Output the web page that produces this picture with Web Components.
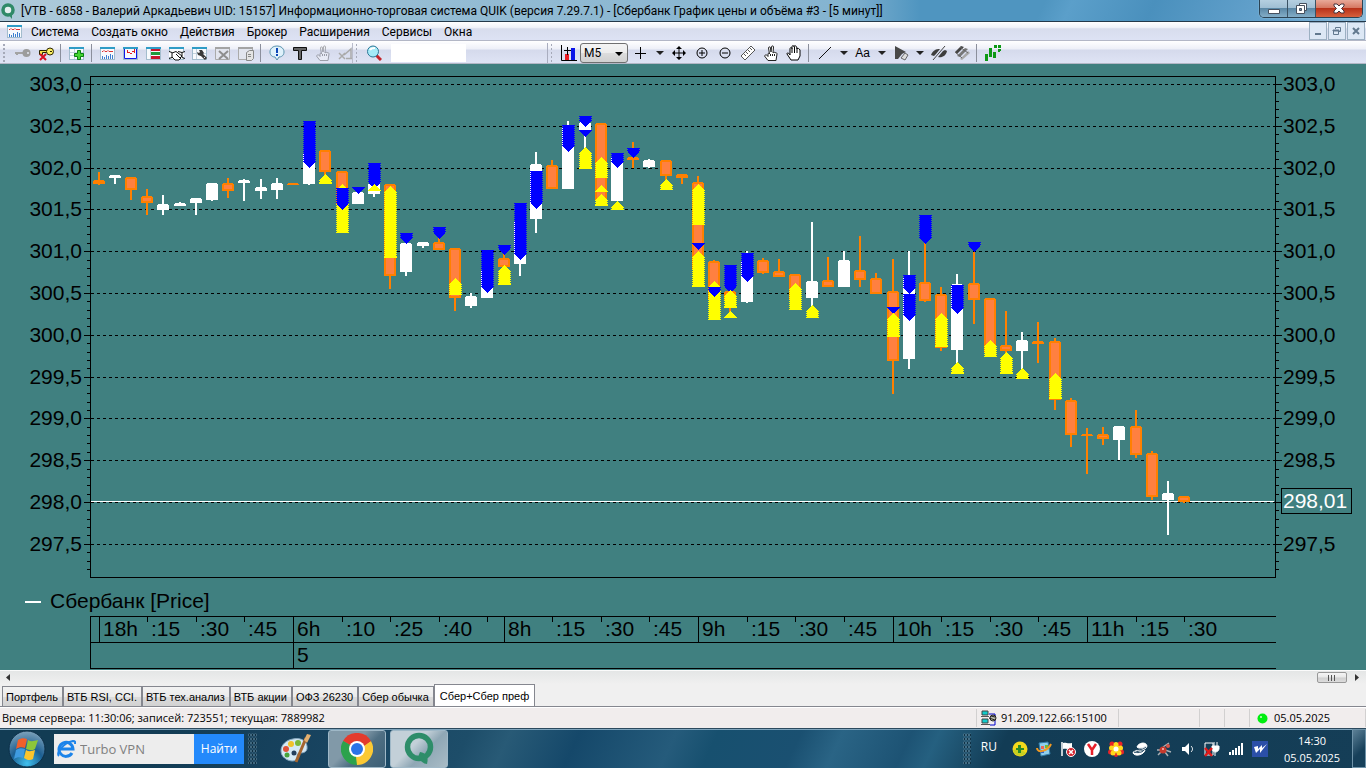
<!DOCTYPE html>
<html lang="ru">
<head>
<meta charset="utf-8">
<title>QUIK – Сбербанк График цены и объёма</title>
<style>
  html, body { height: 100%; margin: 0; }
  body { font-family: "Open Sans", "Noto Sans", sans-serif; font-size: 12px; color: #000; }
</style>
</head>
<body>
<quik-desktop></quik-desktop>
<script>
const RESET = `
  * { box-sizing: border-box; }
  button { font: inherit; color: inherit; border: 0; padding: 0; margin: 0; background: none; cursor: default; white-space: nowrap; }
  svg { display: block; }
`;
class BaseElement extends HTMLElement {
  connectedCallback() {
    if (this.shadowRoot) return;
    this.attachShadow({ mode: 'open' }).innerHTML = `<style>${RESET}${this.styles()}</style>${this.markup()}`;
    this.ready();
  }
  styles() { return ''; }
  markup() { return '<slot></slot>'; }
  ready() {}
}

/* ---------- icons (16×16 grid unless a viewBox is given) ---------- */
const WINDOW = `<path d="M0 2h15v13H0z" fill="#f8fafd"/><path d="M0 2h15v2H0z" fill="#2f9cc6"/><path d="M0 4h1v10H0zM14 4h1v10h-1zM0 14h15v1H0z" fill="#a3bccd"/>`;
const HAND = `<path d="M5 15.500L1.500 11l1.500-1.500 2 2V9c0-1 1-1 1.500 0L5.500 3c0-1.500 2-1.500 2 0l.5 4 .5-5c0-1.500 2-1.500 2 0l-.5 6c1-1 2-1 2 0 1-1 2 0 2 1l-1 6.500z" fill="#fff" stroke="#222"/><path d="M7.500 9v2M9.500 9v2M11.500 9v2" stroke="#222"/>`;
const ICONS = {
  window: WINDOW + '<path d="M2 6.500h1l1-1 1 1h2l1-1 1 1h4" stroke="#d33" fill="none"/><path d="M2 14v-3h1v3h1v-2h1v2h1v-4h1v4h1v-3h1v3h1V9h1v5h1v-4h1v4z" fill="#3d7fd0"/>',
  keyGray: '<path d="M0 7h9v2H3v1H1V9H0z" fill="#a3a3a3"/><circle cx="11.500" cy="8" r="4" fill="#9c9c9c"/><circle cx="13" cy="8" r="1" fill="#e4e7f2"/>',
  keyRed: '<path d="M1.500 5.500h8v2h-5v2h-3z" fill="#f4e24a" stroke="#2b2400"/><circle cx="12" cy="6.500" r="3.500" fill="#fbef63" stroke="#2b2400"/><path d="M12 6h2v1h-2z" fill="#2b2400"/><path d="M2 9l6 6M8 9l-6 6" stroke="#d90f1f" stroke-width="2"/>',
  add: WINDOW + '<path d="M5.500 4v10M1 7.500h13M1 10.500h13" stroke="#c3d2de"/><path d="M8.500 5.500h3v3h3v3h-3v3h-3v-3h-3v-3h3z" fill="#44d431" stroke="#0a7f10"/>',
  graph: WINDOW + '<path d="M1.500 4v9.500h12V4" fill="none" stroke="#1018e8"/><path d="M4 5h1v3H4zM5 7h2v1H5zM7 8h2v1H7zM9 6h2v1H9zM11 4h1v4h-1z" fill="#e02020"/>',
  book: WINDOW + '<path d="M4.500 4v10" stroke="#c3d2de"/><path d="M5 4h9v2H5zM5 11h9v3H5z" fill="#c8152e"/><path d="M5 7h9v3H5z" fill="#1f9a3d"/>',
  shake: WINDOW + '<path d="M0 7l4-1h7l4 1v5l-4 1-1 2H5l-1-2-4-1z" fill="#fff"/><path d="M0 6.500l3 1v5l-3 1M16 6.500l-3 1v5l3 1M3 8l4-1.500L13 11l-2 2M3 12l3 3h4l2-2M7 9l4 4M9 6.500l4 1" fill="none" stroke="#111"/>',
  wrench: WINDOW + '<path d="M4.500 4v10M1 8.500h13" stroke="#c3d2de"/><path d="M8.500 8.500L14 14" stroke="#3a3a3a" stroke-width="3"/><path d="M7 5h3l2 3-3 3-3-1-1-3 2 1 1-1z" fill="#3a3a3a"/><path d="M12 12l1 1" stroke="#ddd"/>',
  windowX: '<path d="M.5 2.500h14v12H.5z" fill="#e2e5ee" stroke="#aaa"/><path d="M0 2h15v2H0z" fill="#a4a4a4"/><path d="M4 6l9 8M13 6l-9 8" stroke="#8e8e8e" stroke-width="2"/>',
  windowD: '<path d="M.5 2.500h14v12H.5z" fill="#e2e5ee" stroke="#aaa"/><path d="M0 2h15v2H0z" fill="#a4a4a4"/><path d="M8.500 7.500l3-2h4v8l-2 2h-5z" fill="#e4e4e4" stroke="#888"/><path d="M10 9.500h3M10 11.500h3" stroke="#888"/>',
  info: '<path d="M8 1c9 0 9 11 2 11l-2 3-2-3C-1 12-1 1 8 1z" fill="#dff1fb" stroke="#5b94ae"/><path d="M7 3h2v5H7zM7 9h2v2H7z" fill="#0d47b8"/>',
  text: '<path d="M1.500 2.500h13v3h-5v9h-3v-9h-5z" fill="#666" stroke="#111"/>',
  hand: HAND,
  handGray: '<g opacity=".35">' + HAND + '</g>',
  arrowGray: '<path d="M1 8l6 6M7 8l-6 6M6 10l7-6v9M8 13.500h6" stroke="#aaa" fill="none" stroke-width="1.500"/>',
  lens: '<path d="M10 10l5 5" stroke="#c3242b" stroke-width="3"/><circle cx="7" cy="6.500" r="5.500" fill="#a5eaf8" stroke="#2d7796"/><path d="M4 5c1-2 3-2 5-2" stroke="#fff" stroke-width="2" fill="none"/>',
  chartAdd: '<path d="M.5 0v15.500H16" stroke="#000" fill="none"/><path d="M4 9h4v6H4z" fill="#ec1c24"/><path d="M10 3h4v12h-4z" fill="#0a14e8"/><path d="M6.500 2v8M3 5.500h7" stroke="#000"/>',
  plus: '<path d="M7 2h1v12H7zM2 8h11v1H2z" fill="#000"/>',
  move: '<path d="M8 2v12M2 8h12" stroke="#000"/><path d="M8 1l3 3H5zM8 15l3-3H5zM1 8l3-3v6zM15 8l-3-3v6z" fill="#000"/>',
  zoomIn: '<circle cx="8" cy="8" r="5" fill="none" stroke="#000"/><path d="M5 8h6M8 5v6" stroke="#000"/>',
  zoomOut: '<circle cx="8" cy="8" r="5" fill="none" stroke="#000"/><path d="M5 8h6" stroke="#000"/>',
  ruler: '<path d="M1 11L11 1l4 4L5 15z" fill="#fff" stroke="#555"/><path d="M4 9l2 2M6 7l2 2M8 5l2 2M10 3l2 2" stroke="#555"/>',
  palm: '<path d="M5 15l-4-6c0-2 2-1 3 1V4c0-2 2-2 2 0V2c0-2 2-2 2 0v0c0-2 2-2 3 1v1c0-1 2-1 3 1v6l-2 4z" fill="#fff" stroke="#000"/><path d="M6 4v4M8.500 2v6M11 3v5" stroke="#000"/>',
  line: '<path d="M2 14L14 2" stroke="#111"/>',
  cone: '<path d="M2 1l11 6-4 2-4 5H2z" fill="#484848"/><path d="M8 13l4-5 3 2-3 5z" fill="#ddd" stroke="#666"/>',
  eye: '<path d="M0 10c2-5 5-6 9-6l-4 5-2 2zM16 6c-1 5-5 7-9 6l5-6 2-1z" fill="#3d3d3d"/><path d="M2 15L14 1" stroke="#444"/>',
  layers: '<path d="M1 7l6-6 3 1-7 7z" fill="#444"/><path d="M3 11l8-8 3 1-8 8z" fill="#777"/><path d="M6 14l8-8 2 2-8 7z" fill="#a8a8a8"/><path d="M1 7l7 6M6 2l8 6" stroke="#666"/>',
  bars: '<path d="M0 9h3v7H0zM4 3h3v9H4zM8 7h3v6H8zM9 0h3v3H9zM13 0h3v3h-3zM13 4h3v2h-1v1h-2z" fill="#0d9915"/>'
};
const icon = (name, size = 16) => `<svg viewBox="0 0 16 16" width="${size}" height="${size}" aria-hidden="true">${ICONS[name]}</svg>`;

/* ---------- title bar ---------- */
customElements.define('title-bar', class extends BaseElement {
  styles() { return `
    :host { display: flex; height: 22px; align-items: flex-start; border-bottom: 1px solid #24394a;
      background: linear-gradient(90deg, rgba(190,211,222,.85) 0, rgba(168,199,217,.8) 400px, rgba(150,190,214,.75) 840px, rgba(90,160,205,0) 920px),
        linear-gradient(115deg, #4f95c0 0 76%, #5b9fca 78%, #4a90bd 84%, #69a5cf 94%, #8cbbd9); }
    .logo { margin: 3px 6px 0 1px; }
    h1 { flex: 1; margin: 0; font: 12px/22px Roboto, "Open Sans", sans-serif; white-space: nowrap; }
    .win { display: flex; height: 18px; margin-right: 3px; border: 1px solid #2b4354; border-top: 0; border-radius: 0 0 5px 5px; overflow: hidden; box-shadow: 0 0 1px #dff; }
    .win button { width: 28px; display: grid; place-items: center; border-right: 1px solid #3a5264; background: linear-gradient(#b5cfe0, #a0bfd4 45%, #5b88a6 50%, #83adc7); }
    .win button:last-child { width: 46px; border: 0; background: linear-gradient(#e8a999, #d67863 45%, #b8321a 50%, #d7603d); }`; }
  markup() { return `
    <svg class="logo" width="14" height="16" viewBox="0 0 14 16"><circle cx="7" cy="7" r="5" fill="#e6f0f0" stroke="#2f8a68" stroke-width="3.500"/><path d="M7 11l4 0v5z" fill="#2f8a68"/></svg>
    <h1>[VTB - 6858 - Валерий Аркадьевич UID: 15157] Информационно-торговая система QUIK (версия 7.29.7.1) - [Сбербанк График цены и объёма #3 - [5 минут]]</h1>
    <div class="win">
      <button aria-label="Свернуть"><svg width="14" height="12"><path d="M1.500 6.500h11v4h-11z" fill="#fff" stroke="#46505e"/></svg></button>
      <button aria-label="Развернуть"><svg width="13" height="13"><path d="M4.500 1.500h7v7h-7z" fill="#fff" stroke="#46505e"/><path d="M1.500 3.500h8v8h-8z" fill="#fff" stroke="#46505e"/><path d="M4.500 6.500h2v2h-2z" fill="#6b93ad" stroke="#46505e"/></svg></button>
      <button aria-label="Закрыть"><svg width="14" height="13"><path d="M2 2h3l2 2 2-2h3v2L9.500 6.500 12 9v2H9L7 9l-2 2H2V9l2.500-2.500L2 4z" fill="#fff" stroke="#46333c"/></svg></button>
    </div>`; }
});

/* ---------- menu ---------- */
customElements.define('menu-bar', class extends BaseElement {
  styles() { return `
    :host { display: flex; height: 19px; align-items: center; padding: 0 1px 0 7px; background: linear-gradient(#fff, #f0f2f9 30%, #d8dded 38%, #dde2f4); border-bottom: 1px solid #b3b7c6; }
    nav { flex: 1; display: flex; padding: 2px 0 0 2px; font: 12px/18px Roboto, "Open Sans", sans-serif; }
    nav button { padding: 0 6px; }
    .mdi { display: flex; gap: 1px; }
    .mdi button { width: 18px; height: 18px; display: grid; place-items: center; border: 1px solid #9cb0c2; background: #dde8f5; }`; }
  markup() { return `${icon('window')}
    <nav>${['Система', 'Создать окно', 'Действия', 'Брокер', 'Расширения', 'Сервисы', 'Окна'].map(t => `<button>${t}</button>`).join('')}</nav>
    <div class="mdi">
      <button aria-label="Свернуть окно"><svg width="10" height="10"><path d="M2 7h6v2H2z" fill="#62798e"/></svg></button>
      <button aria-label="Восстановить окно"><svg width="10" height="10"><path d="M3.500 3V1.500h5v4H7M1.500 4.500h5v4h-5zM1 4h6v1H1z" fill="none" stroke="#62798e"/></svg></button>
      <button aria-label="Закрыть окно"><svg width="10" height="10"><path d="M2 2l6 6M8 2L2 8" stroke="#62798e" stroke-width="2"/></svg></button>
    </div>`; }
});

/* ---------- toolbar ---------- */
customElements.define('tool-button', class extends BaseElement {
  styles() { return `:host { display: block; width: 23px; flex: none; } button { width: 100%; height: 20px; display: grid; place-items: center; font: 12px "Liberation Sans", sans-serif; }
    :host([menu]) { width: 15px; }`; }
  markup() {
    const name = this.getAttribute('icon');
    const inner = this.hasAttribute('menu') ? '<svg width="8" height="5"><path d="M0 0h8L4 4z" fill="#222"/></svg>' : name ? icon(name) : '<slot></slot>';
    return `<button aria-label="${this.getAttribute('label') || name || ''}">${inner}</button>`;
  }
});
customElements.define('tool-bar', class extends BaseElement {
  styles() { return `
    :host { display: flex; height: 23px; align-items: center; padding-top: 2px; background: linear-gradient(#fff, #eef0f8 35%, #d5daec 42%, #dfe4f5); border-bottom: 1px solid #b3b7c6; }
    .group { display: flex; align-items: center; height: 20px; }
    .keys { width: 353px; border-right: 1px solid #b9bccb; overflow: hidden; }
    .find { width: 195px; border-right: 1px solid #a9adbf; }
    i { flex: none; width: 11px; height: 20px; background: radial-gradient(circle, #a5a9b8 1px, transparent 1px) 2px 0 / 4px 4px; background-clip: content-box; padding: 0 5px 0 2px; }
    .find i, .draw i { width: 9px; }
    hr { flex: none; width: 1px; height: 18px; margin: 0 4px 0 3px; border: 0; background: #8b8f9c; }
    .find input { width: 75px; height: 18px; margin-left: 6px; border: 0; background: #fff; padding: 0 4px; font: inherit; }
    .combo { position: relative; width: 48px; height: 20px; margin-right: 1px; }
    select { display: block; appearance: none; width: 48px; height: 20px; padding: 0 0 0 3px; font: 12px Roboto, sans-serif; color: #000; border: 1px solid #707070; border-radius: 3px; background: linear-gradient(#f4f4f4, #ececec 48%, #dcdcdc 52%, #d0d0d0); }
    .combo svg { position: absolute; right: 5px; top: 9px; pointer-events: none; }`; }
  markup() {
    const b = (n, l) => `<tool-button icon="${n}" label="${l}"></tool-button>`;
    const m = '<tool-button menu label="Ещё"></tool-button>';
    return `
    <div class="group keys"><i></i>${b('keyGray', 'Соединить')}${b('keyRed', 'Разъединить')}<hr>${b('add', 'Создать')}<hr>${b('window', 'Таблица')}${b('graph', 'График')}${b('book', 'Котировки')}${b('shake', 'Сделки')}${b('wrench', 'Настройка')}${b('windowX', 'Удалить')}${b('windowD', 'Данные')}<hr>${b('info', 'Сообщения')}${b('text', 'Текст')}${b('handGray', 'Заявка')}${b('arrowGray', 'Снять')}</div>
    <div class="group find"><i></i>${b('lens', 'Найти')}<input aria-label="Поиск"></div>
    <div class="group draw"><i></i>${b('chartAdd', 'Добавить график')}
      <div class="combo"><select aria-label="Интервал"><option>M5</option></select><svg width="8" height="5"><path d="M0 0h8L4 4z" fill="#000"/></svg></div>
      ${b('plus', 'Курсор')}${m}${b('move', 'Переместить')}${b('zoomIn', 'Увеличить')}${b('zoomOut', 'Уменьшить')}${b('ruler', 'Линейка')}${b('hand', 'Указать')}${b('palm', 'Рука')}<hr>${b('line', 'Линия')}${m}<tool-button label="Надпись">Aa</tool-button>${m}${b('cone', 'Заливка')}${m}${b('eye', 'Скрыть')}${b('layers', 'Слои')}<hr>${b('bars', 'Сделки на графике')}</div>`;
  }
});

/* ---------- price chart ---------- */
/* Candle: kind (w rising, o falling), high, body top, body bottom, low; y runs down in chart units. */
const CANDLES = `o 172 180 184 185|w 175 175 178 184|o 177 177 190 200|o 189 196 203 215|w 195 204 210 215|w 202 203 206 206|w 198 198 203 215|w 183 183 200 201|o 178 183 191 198|w 179 180 183 201|w 179 187 191 199|w 178 183 190 199|o 183 183 185 185|w 152 152 184 185|o 150 150 172 175|o 171 171 205 205|w 192 192 204 204|w 183 183 194 197|o 184 184 276 289|w 243 243 272 276|w 242 242 246 248|o 238 242 250 250|o 248 248 298 311|w 293 296 306 308|w 270 270 298 298|o 254 258 267 267|w 220 220 264 276|w 152 164 219 233|o 160 165 189 189|w 121 126 189 189|w 122 122 131 149|o 123 123 200 200|w 156 156 201 201|o 142 157 160 168|w 159 160 167 168|o 160 160 176 180|o 174 174 178 184|o 176 182 270 270|o 260 261 300 300|o 290 291 300 312|w 251 260 302 303|o 258 260 273 274|o 259 271 277 277|o 274 274 300 300|w 222 281 298 306|o 257 280 287 287|w 251 260 287 287|o 236 270 280 287|o 273 278 294 294|o 259 291 361 394|w 251 276 359 369|o 243 282 301 302|o 287 294 348 351|w 274 284 350 363|o 252 283 300 324|o 298 298 352 352|o 311 345 351 353|w 332 340 351 369|o 322 341 344 363|o 338 341 400 410|o 398 400 435 447|o 428 434 436 474|o 427 434 439 445|w 426 426 440 460|o 410 426 455 458|o 451 453 497 500|w 481 493 500 535|o 496 496 502 503`
  .split('|').map(s => { const [k, ...v] = s.split(' '); return [k, ...v.map(Number)]; });
/* Marker: candle index, colour, top, bottom. Blue points down, yellow points up. */
const MARKS = `13 b 121 168|14 y 174 184|15 y 184 233|15 b 188 210|16 b 187 194|17 b 163 189|17 y 184 191|18 y 186 258|19 b 233 244|21 b 227 239|22 y 278 295|24 b 250 293|25 b 245 255|25 y 265 285|26 b 203 260|27 b 171 209|29 b 125 152|30 b 116 127|30 b 130 137|30 y 147 169|31 y 157 178|31 y 185 192|31 y 194 206|32 b 153 168|32 y 201 210|33 b 148 158|35 y 179 190|37 y 184 225|37 b 243 250|37 y 251 287|38 y 281 320|38 b 287 297|39 b 265 293|39 y 290 308|39 y 311 318|40 b 253 282|43 y 283 310|44 y 305 318|49 b 307 314|49 y 313 337|50 b 275 294|50 b 294 321|51 b 215 244|52 y 313 347|53 b 285 314|53 y 362 374|54 b 242 252|55 y 340 357|56 y 352 374|57 y 368 379|59 y 373 399`
  .split('|').map(s => { const [i, c, a, b] = s.split(' '); return [+i, c, +a, +b]; });
const STEP = 16.205, TOP = 64;
const xOf = i => Math.floor(99 + i * STEP);
const HOURS = [[0, '18h'], [12, '6h'], [25, '8h'], [37, '9h'], [49, '10h'], [61, '11h']];
const QUARTERS = [[3, ':15'], [6, ':30'], [9, ':45'], [15, ':10'], [18, ':25'], [21, ':40'], [24, ''], [28, ':15'], [31, ':30'], [34, ':45'], [40, ':15'], [43, ':30'], [46, ':45'], [52, ':15'], [55, ':30'], [58, ':45'], [64, ':15'], [67, ':30']];

customElements.define('price-chart', class extends BaseElement {
  styles() { return `
    :host { display: block; background: #408080; overflow: hidden; }
    svg { width: 100%; height: 606px; }
    text { font: 21px "Liberation Sans", sans-serif; fill: #000; white-space: pre; }`; }
  markup() { return '<svg role="img" aria-label="Сбербанк, 5 минут" shape-rendering="crispEdges"></svg>'; }
  ready() {
    this.draw();
    new ResizeObserver(() => this.draw()).observe(this);
  }
  draw() {
    const right = (this.clientWidth || innerWidth) - 91;
    const out = [];
    const bar = (x, y, w, h, fill = '#000') => out.push(`<rect x="${x}" y="${y - TOP}" width="${w}" height="${h}" fill="${fill}"/>`);
    const text = (x, y, s, extra = '') => out.push(`<text x="${x}" y="${y - TOP}" ${extra}>${s}</text>`);
    const yOf = p => Math.round(84 + (303 - p) * 83.6);

    for (let n = 0; n < 12; n++) {
      const p = 303 - n / 2, y = yOf(p), label = p.toFixed(1).replace('.', ',');
      out.push(`<path d="M91 ${y - TOP + .5}H${right}" stroke="#000" stroke-dasharray="3 3"/>`);
      bar(84, y, 6, 1); bar(right + 1, y, 6, 1);
      text(82, y + 7, label, 'text-anchor="end"');
      if (p !== 298) text(right + 8, y + 7, label);
    }
    for (let n = 0; n <= 58; n++) {
      const y = yOf(303 - n / 10);
      if (n % 5) { bar(87, y, 3, 1); bar(right + 1, y, 3, 1); }
    }
    bar(90, 76, right - 89, 1); bar(90, 577, right - 89, 1); bar(90, 76, 1, 502); bar(right, 76, 1, 502);
    bar(91, 501, right - 92, 1, '#fff');

    CANDLES.forEach(([k, h, t, b, l], i) => {
      const x = xOf(i), edge = k === 'w' ? '#fff' : '#ff8000';
      bar(x - 1, h, 2, l - h, edge);
      bar(x - 5, t, 10, b - t, edge);
      bar(x - 6, t + 1, 12, b - t - 1, edge);
      if (k === 'o' && b - t > 4) bar(x - 4, t + 2, 8, b - t - 4, '#ff8040');
    });
    MARKS.forEach(([i, c, a, b]) => {
      const x = xOf(i) - 6, t = a - TOP, e = b - TOP, s = Math.min(6, b - a - 1), fill = c === 'b' ? '#00f' : '#ff0';
      const shape = c === 'b' ? `M${x} ${t}h13v1h-1V${e - s}L${x + 6.5} ${e}L${x + 1} ${e - s}V${t + 1}h-1z`
                              : `M${x} ${e}h13v-1h-1V${t + s}L${x + 6.5} ${t}L${x + 1} ${t + s}V${e - 1}h-1z`;
      const from = c === 'b' ? t : t + s, to = c === 'b' ? e - s : e;
      out.push(`<path d="${shape}" fill="${fill}"/>`);
      out.push(`<path d="M${x + .5} ${from}V${to}M${x + 12.5} ${from}V${to}" stroke="${fill}" stroke-dasharray="1 1"/>`);
    });

    out.push(`<rect x="${right + 6.5}" y="${488.5 - TOP}" width="70" height="25" fill="#408080" stroke="#000"/>`);
    text(right + 8, 508, '298,01', 'style="fill:#fff"');

    bar(25, 601, 16, 2, '#fff');
    text(50, 608, 'Сбербанк [Price]');
    [616, 642, 668].forEach(y => bar(90, y, right - 89, 1));
    bar(90, 616, 1, 53);
    HOURS.forEach(([i, s]) => { bar(xOf(i), 616, 1, i === 12 ? 53 : 27); text(xOf(i) + 4, 636, s); });
    QUARTERS.forEach(([i, s]) => { bar(xOf(i), 616, 1, 6); if (s) text(xOf(i) + 4, 636, s); });
    text(xOf(12) + 4, 662, '5');
    this.shadowRoot.querySelector('svg').innerHTML = out.join('');
  }
});

customElements.define('scroll-strip', class extends BaseElement {
  styles() { return `
    :host { display: flex; height: 14px; align-items: center; padding: 0 6px; border-top: 1px solid #fbfbfb; background: linear-gradient(#e4e6e6, #f0f0f0); }
    .thumb { width: 30px; height: 11px; margin-left: auto; margin-right: 8px; border: 1px solid #989898; border-radius: 2px; background: linear-gradient(#f5f5f5, #e8e8e8 48%, #d0d0d0 52%, #dcdcdc); display: grid; place-items: center; }`; }
  markup() { return `<button aria-label="Влево"><svg width="5" height="8"><path d="M4 0v7L0 3.500z" fill="#333"/></svg></button>
    <button class="thumb" aria-label="Прокрутка"><svg width="8" height="6"><path d="M.5 0v6M3.500 0v6M6.500 0v6" stroke="#555"/></svg></button>
    <button aria-label="Вправо"><svg width="5" height="8"><path d="M0 0v7l4-3.500z" fill="#333"/></svg></button>`; }
});

/* ---------- window tabs ---------- */
customElements.define('sheet-tabs', class extends BaseElement {
  styles() { return `
    :host { display: flex; height: 23px; align-items: flex-end; padding-left: 2px; background: #f0f0f0; border-bottom: 1px solid #85878f; font: 11px "Liberation Sans", sans-serif; }
    button { height: 20px; padding: 1px 4px 0 3px; border: 1px solid #85878f; border-bottom: 0; background: linear-gradient(#f2f2f2, #ebebeb 50%, #dcdcdc 52%, #d2d2d2); }
    button:first-child { padding: 1px 4px 0; }
    button[aria-selected=true] { height: 22px; padding: 0 5px; background: #fff; }`; }
  markup() { return ['Портфель', 'ВТБ RSI, CCI.', 'ВТБ тех.анализ', 'ВТБ акции', 'ОФЗ 26230', 'Сбер обычка', 'Сбер+Сбер преф']
    .map((t, i) => `<button role="tab" aria-selected="${i === 6}">${t}</button>`).join(''); }
});

/* ---------- status bar ---------- */
customElements.define('status-bar', class extends BaseElement {
  styles() { return `
    :host { display: flex; height: 21px; padding: 1px 0; background: #f1eded; border-top: 1px solid #fff; line-height: 18px; white-space: nowrap; font-size: 11px; }
    span { display: flex; align-items: center; gap: 4px; padding-left: 4px; border-right: 1px solid #d2d0d0; }
    .msg { flex: 1; padding-left: 2px; }
    .net { width: 142px; } .a { width: 81px; } .b { width: 25px; } .date { width: 116px; padding-left: 7px; gap: 6px; }`; }
  markup() { return `<span class="msg">Время сервера: 11:30:06; записей: 723551; текущая: 7889982</span>
    <span class="net"><svg width="16" height="16"><path d="M1 1h6v4H1zM1 9h6v4H1z" fill="#1cc" stroke="#444"/><path d="M0 6h8v1H0zM0 14h9v1H0z" fill="#555"/><path d="M8 4h6v11H9" fill="none" stroke="#00c"/><circle cx="12" cy="8" r="3" fill="#bba" stroke="#222"/><path d="M8 8l6 2M10 6l4 1" stroke="#222"/></svg>91.209.122.66:15100</span>
    <span class="a"></span><span class="b"></span><span class="b"></span>
    <span class="date"><svg width="11" height="11"><circle cx="5.500" cy="5.500" r="5" fill="#00ee10"/><circle cx="4" cy="4" r="1" fill="#c8ffc8"/></svg>05.05.2025</span>`; }
});

/* ---------- taskbar ---------- */
const TRAY = [
  ['Обновление', '<circle cx="8" cy="8" r="7.500" fill="#f4d81c"/><path d="M1 9a7.500 7.500 0 0 0 13 3L8 8z" fill="#c7d021"/><path d="M6 4h3v3h3v2H9v3H6V9H4V7h2z" fill="#2b8a26"/>'],
  ['Windows', '<path d="M3 2l9-1 2 12-9 2z" fill="#8fd0ee" stroke="#347ea8"/><path d="M5 5h3v3H5z" fill="#e65"/><path d="M9 4h3v3H9z" fill="#7b3"/><path d="M5 9h3v3H5z" fill="#36c"/><path d="M1 7c0 6 11 3 14-4" fill="none" stroke="#f39a21" stroke-width="2"/>'],
  ['Центр поддержки', '<path d="M2 1v14" stroke="#fff" stroke-width="1.500"/><path d="M3 2c3-1 4 1 9 0v6c-4 1-6-1-9 0z" fill="#fff"/><circle cx="11" cy="11" r="4.500" fill="#d4202a" stroke="#fff"/><path d="M9 9l4 4M13 9l-4 4" stroke="#fff" stroke-width="1.500"/>'],
  ['Яндекс', '<circle cx="8" cy="8" r="8" fill="#fff"/><path d="M4 3l4 6 4-6M8 8v6" fill="none" stroke="#e8202a" stroke-width="2.500"/>'],
  ['Цветок', '<g fill="#e8242a"><circle cx="4" cy="3" r="2.500"/><circle cx="12" cy="3" r="2.500"/><circle cx="2.500" cy="11" r="2.500"/><circle cx="13.500" cy="11" r="2.500"/><circle cx="8" cy="14" r="2"/></g><g fill="#ffd91c"><circle cx="8" cy="3.500" r="2.500"/><circle cx="3.500" cy="7" r="2.500"/><circle cx="12.500" cy="7" r="2.500"/><circle cx="5" cy="12" r="2.500"/><circle cx="11" cy="12" r="2.500"/><circle cx="8" cy="8" r="4"/></g><circle cx="8" cy="8" r="2.500" fill="#fff"/>'],
  ['Диск', '<path d="M1 12c0-4 13-1 14-7-1-5-9-3-10 1 3 3 8-1 9-1M1 12c2 4 11 2 12-3" fill="#fff" stroke="#fff"/><path d="M4 8c2 2 8 0 10-2M2 11c3 1 8 1 10-2" stroke="#284c66" fill="none"/>'],
  ['Жук', '<path d="M2 14l5-5M7 6l6-4M1 9l5 0M9 9l6 2M9 11l3 4" stroke="#aab0b5" stroke-width="1.500"/><circle cx="7" cy="9" r="3.500" fill="#c63a2d"/><circle cx="12" cy="5" r="2" fill="#d6554a"/><circle cx="7" cy="8" r="1" fill="#fbb"/>'],
  ['Громкость', '<path d="M2 6h3l4-4v12l-4-4H2z" fill="#fff"/><path d="M11 5c2 2 2 4 0 6" fill="none" stroke="#fff"/>'],
  ['Питание', '<path d="M1 2h8v12H1z" fill="none" stroke="#fff"/><path d="M10 1v4M13 1v4M8 5h7v3c-1 4-6 4-7 0zM11 11v4" fill="#fff" stroke="#fff"/><path d="M1 7l7 8M8 7l-7 8" stroke="#e01a1a" stroke-width="2.500"/>'],
  ['Сеть', '<path d="M1 11h2v3H1zM4 9h2v5H4zM7 7h2v7H7zM10 5h2v9h-2zM13 2h2v12h-2z" fill="#fff"/>'],
  ['Webmoney', '<path d="M0 0h16v16H0z" fill="#2b4fa8"/><path d="M2 6l2 6 4-4 0 4 7-9-5 4 0-3-4 4 0-3z" fill="#fff"/>']
];
customElements.define('task-bar', class extends BaseElement {
  styles() { return `
    :host { display: flex; height: 40px; align-items: center; color: #fff; border-top: 1px solid #2d4a5e; box-shadow: inset 0 1px #7fa5bd;
      background: linear-gradient(115deg, #123c54 0 12%, #17425e 22%, #1d4d69 34%, #285a76 37%, #15486a 42%, #255b7b 49%, #17506f 52%, #1a5071 58%, #2a6485 61%, #1d5374 66%, #256080 68%, #123c55 73%, #153e57 100%); }
    .orb { margin: 0 8px; }
    form { display: flex; height: 30px; margin: 0; font: 13px "Open Sans", sans-serif; }
    .field { display: flex; align-items: center; width: 140px; padding-left: 3px; background: #ededed; }
    .field input { flex: 1; min-width: 0; border: 0; padding: 0 0 0 4px; background: none; font: inherit; color: #555; }
    .field input::placeholder { color: #808080; opacity: 1; }
    form button { width: 50px; background: #2389fb; color: #fff; font-size: 12px; }
    i { width: 9px; height: 31px; margin: 0 4px; background: radial-gradient(circle, #0a2433 1px, #5c8196 1px, transparent 2px) 0 0 / 3px 4px; opacity: .7; }
    .paint { margin: 0 17px 0 18px; }
    .task { width: 58px; height: 38px; display: grid; place-items: center; margin-right: 4px; border: 1px solid #9fb8c7; border-radius: 3px; background: linear-gradient(135deg, #8199a8 0 40%, #4f6f83 60%, #3d6076); }
    .task.on { background: linear-gradient(135deg, #c3d0d8 0 40%, #8fa7b5 60%, #a9bcc6); }
    .tray { margin-left: auto; display: flex; align-items: center; height: 100%; gap: 8px; }
    .tray i { margin: 0; width: 8px; }
    .lang { font-size: 12px; margin: -5px 7px 0 2px; }
    .end { display: flex; align-items: center; }
    .clock { width: 76px; padding-right: 4px; text-align: center; font-size: 11px; line-height: 17px; }
    .peek { width: 14px; height: 39px; border: 1px solid #6f93a9; background: linear-gradient(135deg, #5c8096, #17405a 60%); }`; }
  markup() { return `
    <button class="orb" aria-label="Пуск"><svg width="38" height="38" viewBox="0 0 38 38"><defs><radialGradient id="o" cx=".5" cy=".9" r=".9"><stop offset="0" stop-color="#3fc0ee"/><stop offset=".5" stop-color="#1c5f92"/><stop offset="1" stop-color="#7fa3bb"/></radialGradient></defs><circle cx="19" cy="19" r="18" fill="url(#o)" stroke="#0c2f48"/><path d="M10 10c3-2 6-2 9-1l-2 9c-3-1-6-1-9 1z" fill="#f0602c"/><path d="M20 10c3 2 6 1 10 0l-3 9c-3 2-6 1-9 0z" fill="#8cc63a"/><path d="M8 20c3-2 6-2 9-1l-2 9c-3-1-6-1-9 1z" fill="#3f9be0"/><path d="M18 20c3 2 6 1 9 0l-2 9c-3 2-6 1-9-1z" fill="#fcc52c"/></svg></button>
    <form onsubmit="return false"><label class="field"><svg width="19" height="19" viewBox="0 0 19 19"><path d="M15 14a7 7 0 1 1 1-4H4" fill="none" stroke="#1c84ea" stroke-width="3"/><path d="M2 17c-3-3 4-13 14-15 3 0 2 2 2 3" fill="none" stroke="#1c84ea" stroke-width="2"/></svg><input placeholder="Turbo VPN" aria-label="Поиск"></label><button>Найти</button></form>
    <i></i>
    <button class="paint" aria-label="Paint"><svg width="32" height="32" viewBox="0 0 32 32"><path d="M14 6c9-2 15 3 14 10-1 4-5 4-8 4-3 1-1 4-3 7-4 3-15-1-15-9C2 12 7 7 14 6z" fill="#d5e9f5" stroke="#87a9c0"/><circle cx="12" cy="11" r="3" fill="#f0c22a"/><circle cx="7" cy="16" r="3" fill="#e05238"/><circle cx="19" cy="10" r="3" fill="#7ab83a"/><circle cx="8" cy="22" r="2.500" fill="#48a43c"/><circle cx="15" cy="20" r="2.500" fill="#233f5c"/><path d="M27 5L17 29" stroke="#a5652f" stroke-width="3"/><path d="M25 7l3-6 4 1-4 8z" fill="#e3b070"/></svg></button>
    <button class="task" aria-label="Chrome"><svg width="32" height="32" viewBox="0 0 32 32"><path d="M16 16L2.100 8a16 16 0 0 1 27.800 0z" fill="#e33b2e"/><path d="M16 16V32A16 16 0 0 1 2.100 8z" fill="#2ca24c"/><path d="M16 16L29.900 8A16 16 0 0 1 16 32z" fill="#fcc934"/><path d="M9.500 19.800L2.100 8l8 5z" fill="#2ca24c"/><path d="M16 8h13.900L23 13z" fill="#e33b2e"/><path d="M22.500 20L16 32l-1-8z" fill="#fcc934"/><circle cx="16" cy="16" r="8" fill="#fff"/><circle cx="16" cy="16" r="6" fill="#2a73e8"/></svg></button>
    <button class="task on" aria-label="QUIK"><svg width="32" height="34" viewBox="0 0 32 34"><circle cx="16" cy="15" r="11.500" fill="none" stroke="#2e8d69" stroke-width="5.500"/><path d="M17 20c6 1 9 4 7 12-4 0-7-4-9-7z" fill="#2e8d69"/></svg></button>
    <div class="tray"><i></i><span class="lang">RU</span>${TRAY.map(([l, s]) => `<svg width="16" height="16" viewBox="0 0 16 16" role="img" aria-label="${l}">${s}</svg>`).join('')}
      <div class="end"><time class="clock">14:30<br>05.05.2025</time><button class="peek" aria-label="Показать рабочий стол"></button></div></div>`; }
});

customElements.define('quik-desktop', class extends BaseElement {
  styles() { return `:host { display: flex; flex-direction: column; min-height: 100%; }
    title-bar, menu-bar, tool-bar, scroll-strip, sheet-tabs, status-bar, task-bar { flex: none; }
    price-chart { flex: 1 0 auto; }`; }
  markup() { return `<title-bar></title-bar><menu-bar></menu-bar><tool-bar></tool-bar><price-chart></price-chart>
    <scroll-strip></scroll-strip><sheet-tabs></sheet-tabs><status-bar></status-bar><task-bar></task-bar>`; }
});
</script>
</body>
</html>
